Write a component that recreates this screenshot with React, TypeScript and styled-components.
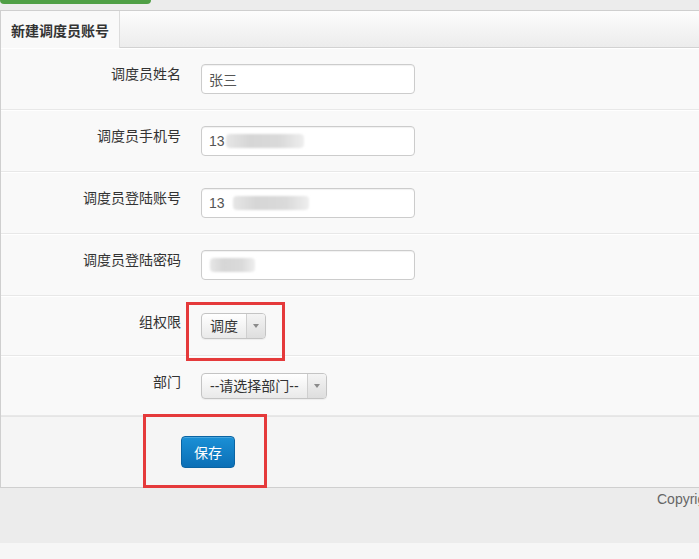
import { createGlobalStyle, styled } from "styled-components"

const Global = createGlobalStyle`
    html, body {
        margin: 0;
        padding: 0;
        background: #f6f6f6;
        font-family: "Liberation Sans", "Noto Sans CJK SC", sans-serif;
        font-size: 14px;
        color: #333;
    }
`

const Page = styled.div`
    width: 699px;
    overflow: hidden;
`

const TopStrip = styled.div`
    height: 10px;
    background: #ececec;

    .btn-edge {
        width: 151px;
        height: 4px;
        background: #4f9f45;
        border-radius: 0 0 4px 4px;
    }
`

const Panel = styled.div`
    border: 1px solid #cfcfcf;
    border-right: none;
    background: #f9f9f9;
`

const PanelHead = styled.div`
    display: flex;
    height: 36px;
    background: linear-gradient(#fdfdfd, #ececec);
    border-bottom: 1px solid #d2d2d2;
`

const Tab = styled.div`
    display: flex;
    align-items: center;
    width: 108px;
    padding-left: 10px;
    margin-bottom: -1px;
    background: #f9f9f9;
    border-right: 1px solid #dcdcdc;
    font-weight: bold;
    font-size: 14px;
    color: #333;
`

const Row = styled.div`
    display: flex;
    padding: 15px 0 15px;
    border-top: 1px solid #fff;
    border-bottom: 1px solid #e8e8e8;
`

const Label = styled.label`
    width: 180px;
    text-align: right;
    line-height: 20px;
    color: #333;
`

const Control = styled.div`
    margin-left: 20px;
`

const Input = styled.div`
    display: flex;
    align-items: center;
    box-sizing: border-box;
    width: 214px;
    height: 30px;
    padding: 0 7px;
    background: #fff;
    border: 1px solid #ccc;
    border-radius: 4px;
    box-shadow: inset 0 1px 1px rgba(0, 0, 0, 0.06);
    color: #555;
`

const Blur = styled.span<{ $w: number; $shift?: number }>`
    display: inline-block;
    width: ${(p) => p.$w}px;
    height: 14px;
    margin-left: ${(p) => p.$shift ?? 0}px;
    background: linear-gradient(90deg, #e6e6e6, #d6d6d6 30%, #dadada 70%, #eeeeee);
    border-radius: 4px;
    filter: blur(1px);
`

const Marked = styled.div<{ $t: number; $r: number; $b: number; $l: number }>`
    position: relative;

    &::after {
        content: "";
        position: absolute;
        top: -${(p) => p.$t}px;
        right: -${(p) => p.$r}px;
        bottom: -${(p) => p.$b}px;
        left: -${(p) => p.$l}px;
        border: 3px solid #e53a3b;
        pointer-events: none;
    }
`

const Select = styled.div`
    display: inline-flex;
    box-sizing: border-box;
    height: 26px;
    margin-top: 1px;
    margin-bottom: 1px;
    background: linear-gradient(#ffffff, #e9e9e9);
    border: 1px solid #c4c4c4;
    border-radius: 4px;
    box-shadow: 0 1px 1px rgba(0, 0, 0, 0.05);
    color: #333;

    .value {
        display: flex;
        align-items: center;
        padding: 0 8px;
        line-height: 1;
    }

    .arrow {
        display: flex;
        align-items: center;
        justify-content: center;
        width: 18px;
        border-left: 1px solid #cfcfcf;
        background: linear-gradient(#f4f4f4, #dedede);
        border-radius: 0 3px 3px 0;
    }

    .arrow::before {
        content: "";
        border-left: 3px solid transparent;
        border-right: 3px solid transparent;
        border-top: 4px solid #8a8a8a;
    }
`

const Actions = styled.div`
    height: 51px;
    padding: 19px 0 0 180px;
    background: #f5f5f5;
    border-top: 1px solid #e5e5e5;
`

const SaveButton = styled.button`
    width: 54px;
    height: 32px;
    padding: 0;
    background: linear-gradient(#1a90d6, #0b6fb6);
    border: 1px solid #0a64a3;
    border-radius: 4px;
    color: #fff;
    font-family: inherit;
    font-size: 14px;
    box-shadow: inset 0 1px 0 rgba(255, 255, 255, 0.2);
`

const Footer = styled.div`
    height: 55px;
    padding-left: 657px;
    background: #ececec;
    white-space: nowrap;
    overflow: hidden;
    font-size: 14px;
    line-height: 22px;
    color: #666;
`

export default () => {
    return (
        <Page>
            <Global />
            <TopStrip>
                <div className="btn-edge" />
            </TopStrip>
            <Panel>
                <PanelHead>
                    <Tab>新建调度员账号</Tab>
                </PanelHead>
                <Row>
                    <Label>调度员姓名</Label>
                    <Control>
                        <Input>张三</Input>
                    </Control>
                </Row>
                <Row>
                    <Label>调度员手机号</Label>
                    <Control>
                        <Input>
                            13
                            <Blur $w={78} $shift={1} />
                        </Input>
                    </Control>
                </Row>
                <Row>
                    <Label>调度员登陆账号</Label>
                    <Control>
                        <Input>
                            13
                            <Blur $w={76} $shift={8} />
                        </Input>
                    </Control>
                </Row>
                <Row>
                    <Label>调度员登陆密码</Label>
                    <Control>
                        <Input>
                            <Blur $w={45} $shift={1} />
                        </Input>
                    </Control>
                </Row>
                <Row>
                    <Label>组权限</Label>
                    <Control>
                        <Marked $t={10} $r={19} $b={21} $l={15}>
                            <Select>
                                <span className="value">调度</span>
                                <span className="arrow" />
                            </Select>
                        </Marked>
                    </Control>
                </Row>
                <Row>
                    <Label>部门</Label>
                    <Control>
                        <Select>
                            <span className="value">--请选择部门--</span>
                            <span className="arrow" />
                        </Select>
                    </Control>
                </Row>
                <Actions>
                    <Marked $t={22} $r={32} $b={20} $l={38} style={{ display: "inline-block" }}>
                        <SaveButton>保存</SaveButton>
                    </Marked>
                </Actions>
            </Panel>
            <Footer>Copyright © 2016 调度管理系统</Footer>
        </Page>
    )
}
